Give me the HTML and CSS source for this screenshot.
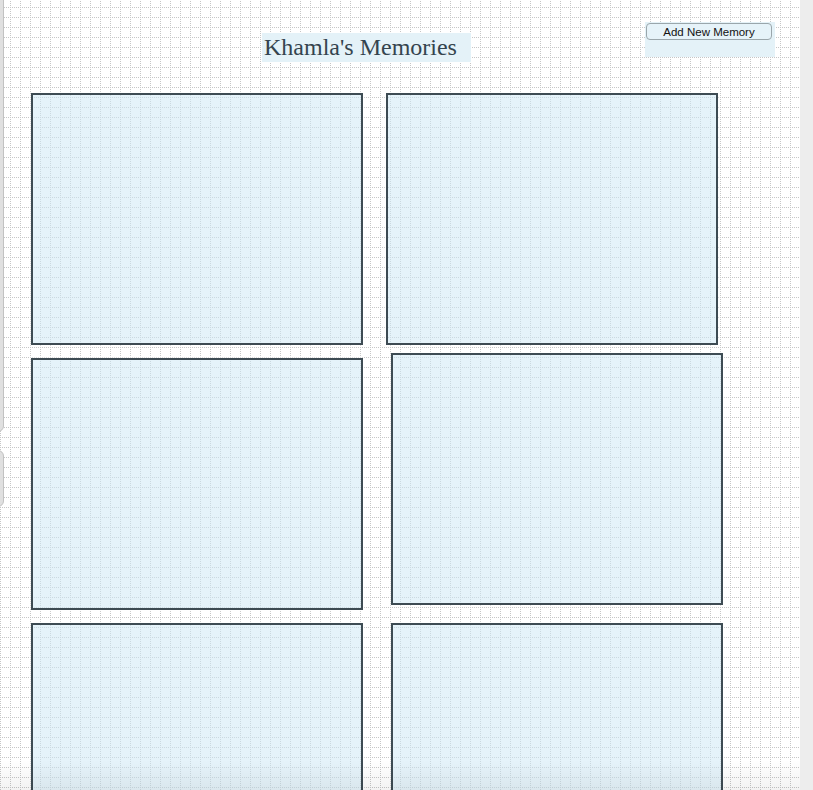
FILE: index.html
```html
<!DOCTYPE html>
<html>
<head>
    <title>Khamla's Memories</title>
    <link rel="stylesheet" href="styles.css">
</head>
<body>
    <div class="page">
        <!-- edges of the side drawer, peeking in from the left -->
        <div class="drawer drawer-top"></div>
        <div class="drawer drawer-bottom"></div>

        <div class="header">
            <h1 class="title">Khamla's Memories</h1>
            <div class="add-wrap">
                <button class="add-btn" type="button">Add New Memory</button>
            </div>
        </div>

        <div class="gallery">
            <div class="memory"></div>
            <div class="memory"></div>
            <div class="memory"></div>
            <div class="memory memory-shift-up"></div>
            <div class="memory"></div>
            <div class="memory memory-shift"></div>
        </div>

        <div class="fade"></div>
    </div>
</body>
</html>
```

FILE: styles.css
```css
body {
    margin: 0;
    padding: 0;
    background-color: #ededed;
    font-family: "Liberation Sans", Arial, sans-serif;
    overflow: hidden;
}

.page {
    position: relative;
    width: 800px;
    height: 790px;
    overflow: hidden;
    background-color: #fff;
    background-image: url("data:image/svg+xml,%3Csvg xmlns='http://www.w3.org/2000/svg' width='10' height='10'%3E%3Cpath d='M0.5 0V10M0 0.5H10' stroke='%23c6c6c6' stroke-width='1' stroke-dasharray='1 1' fill='none'/%3E%3C/svg%3E");
    background-position: 0 7px;
}

.drawer {
    position: absolute;
    left: -18px;
    width: 20px;
    background-color: #e0e0e0;
    border: 1px solid #c2c2c2;
    border-radius: 6px;
}

.drawer-top {
    top: -8px;
    height: 438px;
}

.drawer-bottom {
    top: 450px;
    height: 55px;
}

.header {
    display: flex;
    align-items: flex-start;
    height: 62px;
    box-sizing: border-box;
    padding: 22px 25px 0 262px;
}

.title {
    margin: 11px 0 0 0;
    padding: 0 14px 0 2px;
    height: 29px;
    line-height: 29px;
    font-family: "Liberation Serif", "Times New Roman", serif;
    font-size: 24px;
    font-weight: normal;
    color: #34444e;
    background-color: #e4f2f8;
}

.add-wrap {
    margin-left: auto;
    width: 130px;
    height: 35px;
    padding-top: 1px;
    box-sizing: border-box;
    background-color: #e4f2f8;
}

.add-btn {
    display: block;
    margin-left: 1px;
    width: 126px;
    height: 17px;
    padding: 0;
    font-family: "Liberation Sans", Arial, sans-serif;
    font-size: 11.5px;
    color: #111;
    background-color: #e6f3f9;
    border: 1px solid #9aa6ab;
    border-radius: 4px;
}

.gallery {
    display: grid;
    grid-template-columns: 332px 332px;
    grid-auto-rows: 252px;
    column-gap: 23px;
    row-gap: 13px;
    margin-top: 31px;
    padding-left: 31px;
}

.memory {
    box-sizing: border-box;
    width: 332px;
    height: 252px;
    border: 2px solid #3d4b53;
    background-color: rgba(208, 234, 245, 0.55);
    box-shadow: 0 0 3px rgba(255, 255, 255, 0.9);
}

.memory-shift {
    margin-left: 5px;
}

.memory-shift-up {
    margin-left: 5px;
    margin-top: -5px;
}

.fade {
    position: absolute;
    left: 0;
    right: 0;
    bottom: 0;
    height: 30px;
    background: linear-gradient(to bottom, rgba(0, 0, 0, 0), rgba(0, 0, 0, 0.05));
}
```
